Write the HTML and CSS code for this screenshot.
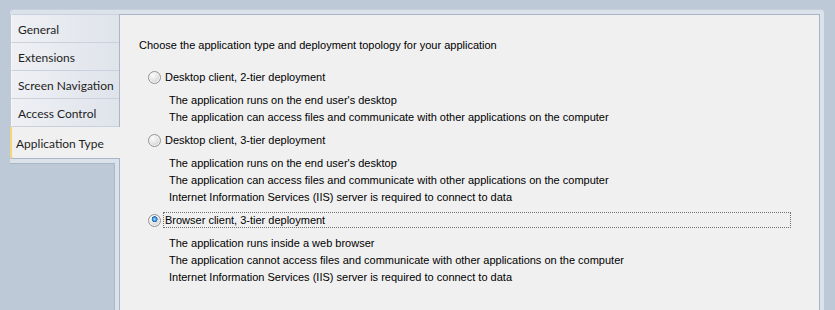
FILE: index.html
```html
<!DOCTYPE html>
<html lang="en">
<head>
    <meta charset="UTF-8">
    <title>Application Type</title>
    <link rel="stylesheet" href="styles.css">
</head>
<body>

    <div class="window">
        <!-- Tab list -->
        <div class="tabs">
            <div class="tab">General</div>
            <div class="tab">Extensions</div>
            <div class="tab">Screen Navigation</div>
            <div class="tab">Access Control</div>
            <div class="tab selected">Application Type</div>
            <div class="tabs-rest"></div>
        </div>

        <!-- Page content -->
        <div class="panel">
            <p class="intro">Choose the application type and deployment topology for your application</p>

            <div class="option">
                <label class="choice"><input type="radio" name="apptype"> <span>Desktop client, 2-tier deployment</span></label>
                <div class="desc">
                    <div>The application runs on the end user's desktop</div>
                    <div>The application can access files and communicate with other applications on the computer</div>
                </div>
            </div>

            <div class="option">
                <label class="choice"><input type="radio" name="apptype"> <span>Desktop client, 3-tier deployment</span></label>
                <div class="desc">
                    <div>The application runs on the end user's desktop</div>
                    <div>The application can access files and communicate with other applications on the computer</div>
                    <div>Internet Information Services (IIS) server is required to connect to data</div>
                </div>
            </div>

            <div class="option">
                <label class="choice focused"><input type="radio" name="apptype" checked> <span>Browser client, 3-tier deployment</span></label>
                <div class="desc">
                    <div>The application runs inside a web browser</div>
                    <div>The application cannot access files and communicate with other applications on the computer</div>
                    <div>Internet Information Services (IIS) server is required to connect to data</div>
                </div>
            </div>
        </div>
    </div>

</body>
</html>
```

FILE: styles.css
```css
body {
    margin: 0;
    height: 310px;
    overflow: hidden;
    background-color: #bdc9d7;
}

.window {
    display: flex;
    width: 810px;
    height: 296px;
    margin: 10px 0 0 10px;
    border-top: 4px solid #dce2ea;
    border-right: 4px solid #dce2ea;
    border-radius: 3px 3px 0 0;
    box-shadow: 0 -1px 0 #c6d0dc;
}

/* tabs */
.tabs {
    display: flex;
    flex-direction: column;
    width: 109px;
    flex-shrink: 0;
    font-family: Lato, sans-serif;
    font-size: 12px;
    color: #1e1e1e;
}

.tab {
    height: 25px;
    padding: 2px 0 0 6px;
    line-height: 25px;
    margin-left: 1px;
    border-left: 1px solid #f6f7f9;
    border-bottom: 1px solid #c9d1dc;
    background: linear-gradient(to right, #eef0f4, #dfe4eb);
    white-space: nowrap;
}

.tab:first-child {
    border-top: 1px solid #c9d1dc;
}

.tab.selected {
    position: relative;
    z-index: 1;
    height: 29px;
    line-height: 29px;
    padding: 2px 0 0 4px;
    margin-left: 0;
    margin-right: -1px;
    border-left: 2px solid #f5d57c;
    border-bottom: 1px solid #a9b6c7;
    border-bottom-left-radius: 3px;
    background: #f0f0f0;
}

.tabs-rest {
    flex: 1;
    border-top: 4px solid #dce2ea;
    border-right: 4px solid #dce2ea;
    box-shadow: inset -1px 1px 0 #a9b6c7;
}

/* content */
.panel {
    flex: 1;
    padding: 23px 0 0 19px;
    background-color: #f0f0f0;
    border: 1px solid #a9b6c7;
    border-bottom: none;
    font-family: "Liberation Sans", Arial, sans-serif;
    font-size: 11px;
    color: #000;
}

.intro {
    margin: 0 0 18px;
    line-height: 14px;
}

.option {
    margin-left: 9px;
}

.choice {
    display: inline-flex;
    align-items: center;
    height: 14px;
    margin-bottom: 8px;
    line-height: 14px;
}

.choice span {
    padding: 0 1px;
    border: 1px dotted transparent;
}

.choice.focused span {
    width: 624px;
    border-color: #6f6f6f;
}

.choice input {
    appearance: none;
    width: 13px;
    height: 13px;
    margin: 0 2px 0 0;
    border: 1px solid #939393;
    border-radius: 50%;
    background: radial-gradient(circle at 35% 30%, #fbfbfb 0, #e6e6e6 45%, #c4c4c4 100%);
    box-shadow: inset 0 0 0 1px #f4f4f4;
    box-sizing: border-box;
}

.choice input:checked {
    background:
        radial-gradient(circle closest-side at 45% 40%, #bfe6ff 0, #3d9ee8 50%, #1d5ea6 85%, transparent 100%),
        radial-gradient(circle at 35% 30%, #fbfbfb 0, #e6e6e6 45%, #c4c4c4 100%);
    background-size: 8px 8px, 100% 100%;
    background-position: center, center;
    background-repeat: no-repeat;
}

.desc {
    margin: 0 0 7px 21px;
    line-height: 17px;
}
```
